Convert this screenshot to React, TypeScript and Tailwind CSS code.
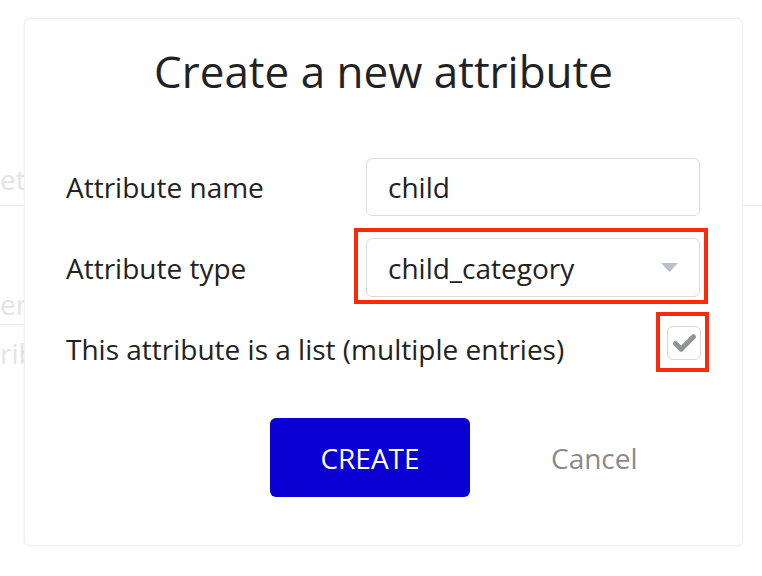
import { Check } from "lucide-react";

const font = { fontFamily: '"Open Sans", "Liberation Sans", sans-serif' };

export default function App() {
  return (
    <div className="relative w-[762px] h-[576px] bg-white overflow-hidden text-[#222]" style={font}>
      {/* Page behind the dialog */}
      <div className="flex flex-col text-[28px] text-[#e4e4e4]">
        <div className="h-[152px]" />
        <div className="h-[54px] flex items-center border-b border-[#ececec] leading-none">et</div>
        <div className="flex">
          <div className="w-[40px] flex flex-col">
            <div className="h-[119px] flex items-end pb-[6px] border-b border-[#ececec] leading-none">en</div>
            <div className="h-[60px] flex items-center leading-none pb-[4px]">rib</div>
          </div>
        </div>
      </div>

      {/* Dialog */}
      <div className="absolute left-[24px] top-[18px] w-[719px] h-[528px] bg-white rounded-md border border-[#efefef] shadow-[0_0_3px_rgba(0,0,0,0.05)] flex flex-col">
        <h1 className="text-center text-[44px] leading-[60px] mt-[22px] text-[#222]">Create a new attribute</h1>

        <div className="mt-[57px] pl-[41px] pr-[41px] flex flex-col">
          {/* Name */}
          <div className="flex items-center h-[58px]">
            <div className="w-[300px] text-[28px] leading-none">Attribute name</div>
            <div className="w-[334px] h-[58px] border border-[#dcdcdc] rounded-md flex items-center pl-[21px] text-[28px]">child</div>
          </div>

          {/* Type */}
          <div className="flex items-center h-[59px] mt-[22px]">
            <div className="w-[300px] text-[28px] leading-none">Attribute type</div>
            <div className="relative w-[334px] h-[59px]">
              <div className="absolute -left-[12px] -top-[10px] -right-[8px] -bottom-[7px] border-[4px] border-[#fb2a0a]" />
              <div className="relative w-full h-full border border-[#dcdcdc] rounded-md flex items-center justify-between pl-[21px] pr-[21px] text-[28px] bg-white">
                <span>child_category</span>
                <svg width="17" height="9" viewBox="0 0 17 9">
                  <path d="M0 0h17L8.5 9z" fill="#b9c1c8" />
                </svg>
              </div>
            </div>
          </div>

          {/* List */}
          <div className="flex items-start justify-between mt-[29px]">
            <div className="text-[28px] leading-none pt-[9px]">This attribute is a list (multiple entries)</div>
            <div className="relative w-[34px] h-[34px]">
              <div className="absolute -left-[11px] -top-[14px] -right-[8px] -bottom-[12px] border-[4px] border-[#fb2a0a]" />
              <div className="relative w-full h-full border border-[#d8d8d8] rounded-md bg-white flex items-center justify-center">
                <Check size={27} strokeWidth={4.5} color="#8f9697" />
              </div>
            </div>
          </div>
        </div>

        {/* Actions */}
        <div className="flex items-center mt-[55px] pl-[245px]">
          <button className="w-[200px] h-[79px] rounded-md bg-[#0a00d2] text-white text-[28px]">CREATE</button>
          <button className="ml-[81px] text-[28px] text-[#8a8a8a]">Cancel</button>
        </div>
      </div>
    </div>
  );
}
